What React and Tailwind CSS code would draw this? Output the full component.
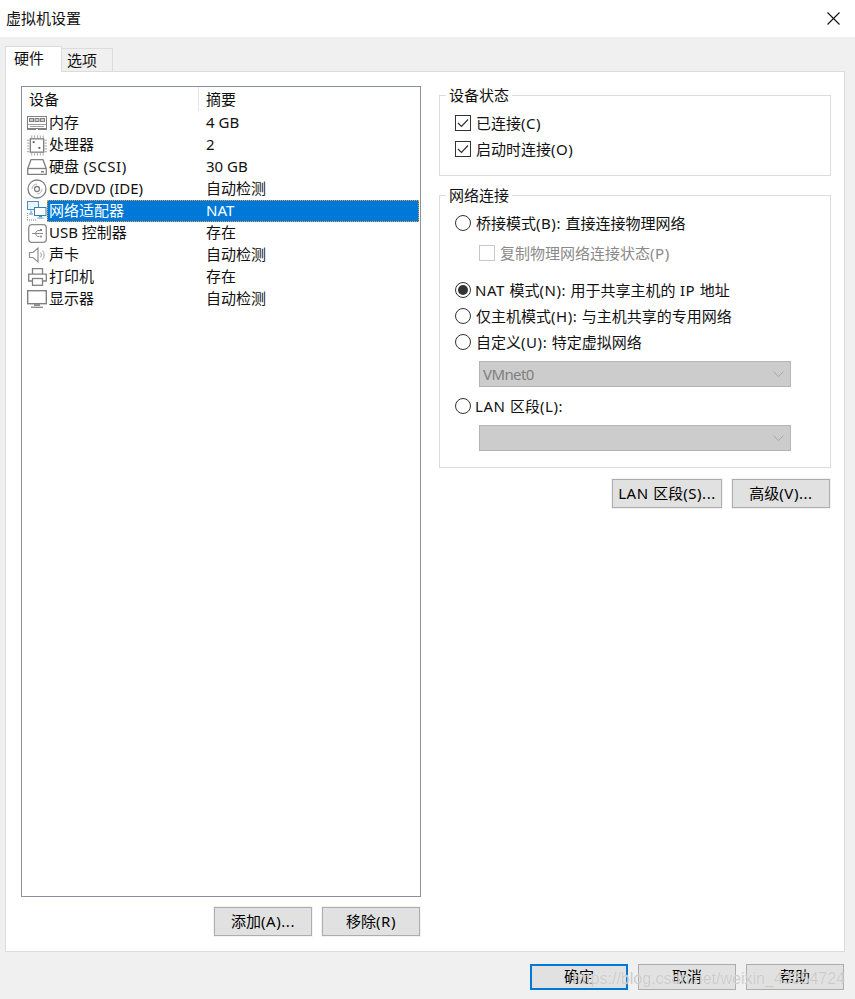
const FONT = "font-['Noto_Sans','Noto_Sans_CJK_SC',sans-serif]";

function T({ children }) {
  const parts = children.split(/([\u4e00-\u9fff]+)/);
  return (
    <>
      {parts.map((p, i) =>
        /[\u4e00-\u9fff]/.test(p) || !p ? (
          <span key={i}>{p}</span>
        ) : (
          <span key={i} className="tracking-[0.55px] whitespace-pre">
            {p}
          </span>
        )
      )}
    </>
  );
}

function Ram() {
  return (
    <svg width="20" height="14" viewBox="0 0 20 14" fill="none" stroke="#808080">
      <rect x="0.5" y="0.5" width="19" height="12" fill="#fff" />
      <rect x="2.5" y="2.5" width="4" height="3" fill="#ccc" />
      <rect x="8" y="2.5" width="4" height="3" fill="#ccc" />
      <rect x="13.5" y="2.5" width="4" height="3" fill="#ccc" />
      <path d="M1 8.5h18M3 10.5h14" stroke="#a0a0a0" />
      <path d="M0 13.5h9M11 13.5h9" />
    </svg>
  );
}
function Cpu() {
  return (
    <svg width="21" height="21" viewBox="0 0 21 21" fill="none" stroke="#808080">
      <rect x="3.5" y="3.5" width="14" height="14" strokeWidth="1.4" />
      <path d="M5 0v2.5M8 0v2.5M11 0v2.5M14 0v2.5M17 0v2.5M5 18.500v2.500M8 18.500v2.500M11 18.500v2.500M14 18.500v2.500M17 18.500v2.500M0 5h2.500M0 8h2.500M0 11h2.500M0 14h2.500M0 17h2.500M18.500 5h2.500M18.500 8h2.500M18.500 11h2.500M18.500 14h2.500M18.500 17h2.500" stroke="#a0a0a0" />
      <rect x="6" y="6" width="2" height="2" fill="#606060" stroke="none" />
      <rect x="12" y="12" width="2" height="2" fill="#606060" stroke="none" />
    </svg>
  );
}
function Disk() {
  return (
    <svg width="20" height="16" viewBox="0 0 20 16" fill="none" stroke="#808080">
      <path d="M4 .7h12l3.300 9v5.600H.7V9.700z" strokeWidth="1.300" />
      <path d="M1 9.500h18" strokeWidth="1.300" />
      <rect x="14" y="12" width="3" height="1.500" fill="#808080" stroke="none" />
    </svg>
  );
}
function Cd() {
  return (
    <svg width="20" height="20" viewBox="0 0 20 20" fill="none" stroke="#808080">
      <circle cx="10" cy="10" r="9" strokeWidth="1.300" />
      <circle cx="10" cy="10" r="2.500" strokeWidth="1.300" />
      <path d="M5 10a5 5 0 0 1 5-5" stroke="#b0b0b0" />
      <path d="M15 10a5 5 0 0 1-5 5" stroke="#b0b0b0" />
    </svg>
  );
}
function Net() {
  return (
    <svg width="20" height="20" viewBox="0 0 20 20" fill="none">
      <rect x="0.500" y="0.500" width="11" height="8" fill="#e8f3fb" stroke="#4a8fc4" />
      <rect x="7.500" y="6.500" width="11.500" height="8" fill="#fff" stroke="#2f7fbd" />
      <path d="M12 15.500h3M10.500 17h6" stroke="#4a8fc4" />
      <path d="M4 9.500v3M2 13h4" stroke="#4a8fc4" />
      <path d="M0 19h9" stroke="#808080" strokeDasharray="1 1" />
      <path d="M0.500 12v7" stroke="#9a9a9a" strokeDasharray="1 1" />
    </svg>
  );
}
function Usb() {
  return (
    <svg width="19" height="19" viewBox="0 0 19 19" fill="none" stroke="#8c8c8c">
      <rect x="0.700" y="0.700" width="17.600" height="17.600" rx="3" strokeWidth="1.300" />
      <path d="M4 9.500h11M7 9.500l2.500-3h2.500M7 9.500l2.500 3h2" />
      <rect x="12" y="5" width="2" height="2" fill="#808080" stroke="none" />
      <circle cx="13" cy="12.500" r="1" fill="#808080" stroke="none" />
    </svg>
  );
}
function Speaker() {
  return (
    <svg width="18" height="18" viewBox="0 0 18 18" fill="none" stroke="#909090">
      <path d="M1.500 6.500h3.500l5-4.500v14l-5-4.500H1.500z" strokeWidth="1.200" />
      <path d="M12.500 6.500a4 4 0 0 1 0 5M14.500 4.500a7 7 0 0 1 0 9" stroke="#a0a0a0" />
    </svg>
  );
}
function Printer() {
  return (
    <svg width="19" height="18" viewBox="0 0 19 18" fill="none" stroke="#808080" strokeWidth="1.300">
      <path d="M4.500 6V.7h10V6" />
      <path d="M4 13H.7V6.200h17.600V13H15" />
      <rect x="4.500" y="10.500" width="10" height="6.800" fill="#fff" />
    </svg>
  );
}
function Monitor() {
  return (
    <svg width="20" height="18" viewBox="0 0 20 18" fill="none">
      <rect x="0.700" y="0.700" width="18.600" height="13" stroke="#808080" strokeWidth="1.400" fill="#fff" />
      <path d="M7 15h6" stroke="#909090" strokeWidth="2" />
      <path d="M4 17.300h12" stroke="#909090" strokeWidth="1.400" />
    </svg>
  );
}

const ROWS = [
  [Ram, "内存", "4 GB"],
  [Cpu, "处理器", "2"],
  [Disk, <T>硬盘 (SCSI)</T>, "30 GB"],
  [Cd, "CD/DVD (IDE)", "自动检测"],
  [Net, "网络适配器", "NAT", true],
  [Usb, "USB 控制器", "存在"],
  [Speaker, "声卡", "自动检测"],
  [Printer, "打印机", "存在"],
  [Monitor, "显示器", "自动检测"],
];

function Row({ Icon, name, value, selected }) {
  return (
    <div className="flex h-[22px] items-center">
      <div className="flex h-[22px] w-[25px] shrink-0 items-center justify-center pl-[5px]">
        <Icon />
      </div>
      {selected ? (
        <div className="flex h-[22px] w-[372px] items-center border border-dotted border-[#e8a040] bg-[#0078d7] pb-[2px] text-white">
          <span className="w-[158px] pl-[1px]">{name}</span>
          <span>{value}</span>
        </div>
      ) : (
        <div className="flex h-[22px] items-center pb-[2px]">
          <span className="w-[159px] pl-[2px]">{name}</span>
          <span>{value}</span>
        </div>
      )}
    </div>
  );
}

function Btn({ w, children }) {
  return (
    <button
      className={`flex h-[29px] items-center justify-center border border-[#adadad] bg-[#e1e1e1] pb-px text-[15px] leading-none text-black outline outline-1 outline-[#f3f3f3] ${w}`}
    >
      {children}
    </button>
  );
}

function FootBtn({ children, primary }) {
  return (
    <button
      className={`flex h-[26px] w-[98px] items-center justify-center bg-[#e1e1e1] pb-[2px] text-[15px] leading-none text-black ${
        primary ? "border-2 border-[#0078d7]" : "border border-[#adadad]"
      }`}
    >
      {children}
    </button>
  );
}

function Check({ checked, disabled, label }) {
  return (
    <div className={`flex h-[26px] items-center gap-[5px] ${disabled ? "text-[#8a8a8a]" : ""}`}>
      <span
        className={`flex h-4 w-4 items-center justify-center border bg-white ${
          disabled ? "border-[#c8c8c8]" : "border-[#333333]"
        }`}
      >
        {checked && (
          <svg width="12" height="12" viewBox="0 0 12 12" fill="none" stroke="#333" strokeWidth="1.200">
            <path d="M1 6l3.500 3.500L11 2.500" />
          </svg>
        )}
      </span>
      <span className="-mt-px">
        <T>{label}</T>
      </span>
    </div>
  );
}

function Radio({ checked, label, gap = "gap-[5px]" }) {
  return (
    <div className={`flex h-[26px] items-center ${gap}`}>
      <span className="flex h-4 w-4 items-center justify-center rounded-full border border-[#333333] bg-white">
        {checked && <span className="h-[10px] w-[10px] rounded-full bg-[#333333]" />}
      </span>
      <span className="-mt-px">
        <T>{label}</T>
      </span>
    </div>
  );
}

function Select({ value, className = "" }) {
  return (
    <div className={`ml-6 flex h-[26px] w-[312px] items-center justify-between border border-[#b4b4b4] bg-[#cccccc] pl-[3px] pr-[6px] text-[#808080] ${className}`}>
      <span className="tracking-[-0.6px]">{value}</span>
      <svg width="11" height="6" viewBox="0 0 11 6" fill="none" stroke="#a8a8a8">
        <path d="M.5.500l5 5 5-5" />
      </svg>
    </div>
  );
}

function Group({ title, className, children }) {
  return (
    <div className={`relative border border-[#dcdcdc] pl-[15px] ${className}`}>
      <span className="absolute -top-[12px] left-[6px] bg-white px-[3px] leading-[22px]">{title}</span>
      {children}
    </div>
  );
}

export default function App() {
  return (
    <div className={`relative flex h-[999px] w-[855px] flex-col overflow-hidden bg-[#f0f0f0] text-[15px] leading-[22px] text-[#111111] ${FONT}`}>
      <header className="flex h-[37px] items-center justify-between bg-white pl-[6px] pr-[15px]">
        <span className="-mt-[2px]">虚拟机设置</span>
        <svg width="13" height="13" viewBox="0 0 13 13" stroke="#111" strokeWidth="1.100">
          <path d="M.5.500l12 12M12.500.500l-12 12" />
        </svg>
      </header>

      <div className="flex h-[34px] items-end pl-[5px] leading-[20px]">
        <div className="z-10 -mb-px h-[26px] w-[57px] border border-b-0 border-[#dcdcdc] bg-white pl-[8px] pt-px">
          硬件
        </div>
        <div className="h-[23px] w-[51px] border border-b-0 border-l-0 border-[#dcdcdc] bg-[#f0f0f0] pl-[5px] pt-px">
          选项
        </div>
      </div>

      <main className="ml-[5px] flex h-[881px] w-[840px] border border-[#dcdcdc] bg-white pl-[15px] pt-[14px]">
        <section className="flex w-[400px] shrink-0 flex-col">
          <div className="h-[811px] border border-[#8a919c] bg-white">
            <div className="flex h-[25px] items-start">
              <span className="flex h-[24px] w-[177px] items-center border-r border-[#e5e5e5] pl-[7px]">设备</span>
              <span className="flex h-[24px] items-center pl-[7px]">摘要</span>
            </div>
            {ROWS.map(([Icon, name, value, selected], i) => (
              <Row key={i} Icon={Icon} name={name} value={value} selected={selected} />
            ))}
          </div>
          <div className="mt-[10px] flex justify-end gap-[10px] pr-px">
            <Btn w="w-[98px]"><T>添加(A)...</T></Btn>
            <Btn w="w-[98px]"><T>移除(R)</T></Btn>
          </div>
        </section>

        <section className="ml-[18px] flex w-[392px] flex-col pt-[9px]">
          <Group title="设备状态" className="h-[81px] pt-[14px]">
            <Check checked label="已连接(C)" />
            <Check checked label="启动时连接(O)" />
          </Group>
          <Group title="网络连接" className="mt-[19px] h-[273px] pt-[14px]">
            <Radio label="桥接模式(B): 直接连接物理网络" />
            <div className="mt-1 pl-6">
              <Check disabled label="复制物理网络连接状态(P)" />
            </div>
            <div className="mt-[11px]">
              <Radio checked gap="gap-1" label="NAT 模式(N): 用于共享主机的 IP 地址" />
            </div>
            <Radio label="仅主机模式(H): 与主机共享的专用网络" />
            <Radio label="自定义(U): 特定虚拟网络" />
            <Select value="VMnet0" className="mt-[6px]" />
            <div className="mt-[6px]">
              <Radio gap="gap-1" label="LAN 区段(L):" />
            </div>
            <Select value="" className="mt-[6px]" />
          </Group>
          <div className="mt-[11px] flex justify-end gap-[10px] pr-px">
            <Btn w="w-[110px]"><T>LAN 区段(S)...</T></Btn>
            <Btn w="w-[98px]"><T>高级(V)...</T></Btn>
          </div>
        </section>
      </main>

      <footer className="mt-[12px] flex justify-end gap-[10px] pr-[11px]">
        <FootBtn primary>确定</FootBtn>
        <FootBtn>取消</FootBtn>
        <FootBtn>帮助</FootBtn>
      </footer>

      <span className="pointer-events-none absolute right-[10px] top-[968px] font-['Liberation_Sans',sans-serif] text-[16px] leading-[22px] whitespace-nowrap text-[#c2c2c2]/80 [text-shadow:0_0_1px_#f5f5f5]">
        https://blog.csdn.net/weixin_43354724
      </span>
    </div>
  );
}
